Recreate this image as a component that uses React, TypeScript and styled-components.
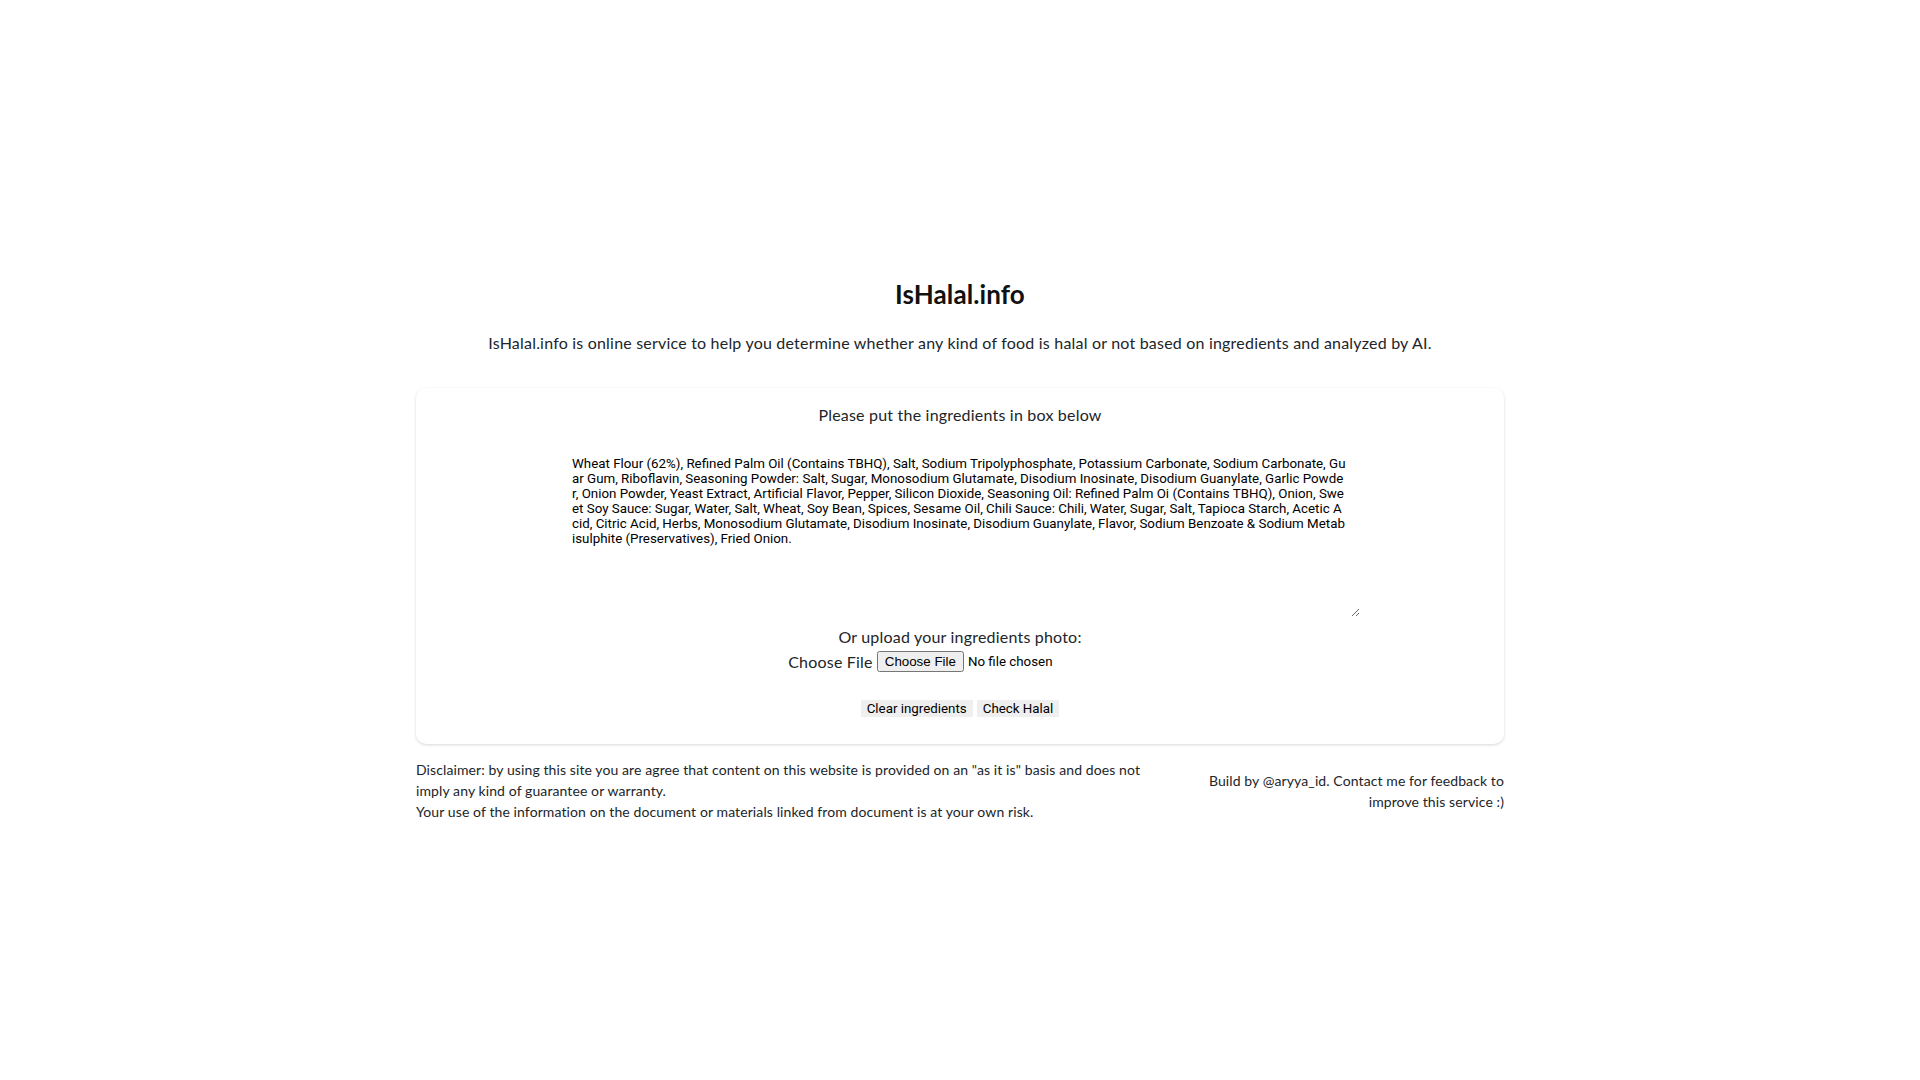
import React from "react";
import styled, { createGlobalStyle } from "styled-components";

const Global = createGlobalStyle`
  html, body { margin: 0; padding: 0; background: #ffffff; }
  body { font-family: Lato, "Noto Sans", sans-serif; color: #212529; letter-spacing: 0.2px; }
`;

const Page = styled.main`
  width: 1088px;
  margin: 0 auto;
  padding-top: 280px;
  display: flex;
  flex-direction: column;
  align-items: stretch;
`;

const Title = styled.h1`
  margin: 0;
  font-size: 26px;
  line-height: 29px;
  font-weight: 700;
  text-align: center;
  color: #111;
  letter-spacing: 0.1px;
`;

const Lead = styled.p`
  margin: 22px 0 0;
  font-size: 16px;
  line-height: 24px;
  text-align: center;
`;

const Card = styled.section`
  margin-top: 33px;
  background: #fff;
  border-radius: 10px;
  box-shadow: 0 1px 3px rgba(0, 0, 0, 0.16);
  padding: 15px 0 27px;
  display: flex;
  flex-direction: column;
  align-items: center;
`;

const Prompt = styled.p<{ $gap?: number }>`
  margin: ${(p) => p.$gap ?? 0}px 0 0;
  font-size: 16px;
  line-height: 24px;
  text-align: center;
`;

const Ingredients = styled.textarea`
  margin-top: 17px;
  width: 800px;
  height: 173px;
  box-sizing: border-box;
  padding: 12px;
  border: none;
  outline: none;
  resize: vertical;
  font-family: Roboto, "Liberation Sans", sans-serif;
  font-size: 13.33px;
  line-height: 15px;
  letter-spacing: 0;
  color: #000;
  word-break: break-all;
  background: #fff;
`;

const UploadRow = styled.div`
  display: flex;
  align-items: center;
  gap: 4px;
  height: 24px;
  font-size: 16px;
`;

const FileInput = styled.input`
  font-family: Roboto, "Liberation Sans", sans-serif;
  font-size: 13.33px;
  letter-spacing: 0;
  color: #000;
`;

const Actions = styled.div`
  margin-top: 27px;
  display: flex;
  gap: 4px;
`;

const Btn = styled.button`
  border: none;
  background: #efefef;
  padding: 1px 6px;
  font-family: Roboto, "Liberation Sans", sans-serif;
  font-size: 13.33px;
  line-height: 15px;
  letter-spacing: 0;
  color: #000;
  cursor: pointer;
`;

const Footer = styled.footer`
  margin-top: 15px;
  display: flex;
  justify-content: space-between;
  align-items: center;
  font-size: 14px;
  line-height: 21px;
  letter-spacing: 0.1px;
`;

const Disclaimer = styled.div`
  width: 750px;
`;

const Credit = styled.div`
  width: 320px;
  text-align: right;
`;

const TEXT =
  "Wheat Flour (62%), Refined Palm Oil (Contains TBHQ), Salt, Sodium Tripolyphosphate, Potassium Carbonate, Sodium Carbonate, Guar Gum, Riboflavin, Seasoning Powder: Salt, Sugar, Monosodium Glutamate, Disodium Inosinate, Disodium Guanylate, Garlic Powder, Onion Powder, Yeast Extract, Artificial Flavor, Pepper, Silicon Dioxide, Seasoning Oil: Refined Palm Oi (Contains TBHQ), Onion, Sweet Soy Sauce: Sugar, Water, Salt, Wheat, Soy Bean, Spices, Sesame Oil, Chili Sauce: Chili, Water, Sugar, Salt, Tapioca Starch, Acetic Acid, Citric Acid, Herbs, Monosodium Glutamate, Disodium Inosinate, Disodium Guanylate, Flavor, Sodium Benzoate & Sodium Metabisulphite (Preservatives), Fried Onion.";

export default function App() {
  return (
    <>
      <Global />
      <Page>
        <Title>IsHalal.info</Title>
        <Lead>
          IsHalal.info is online service to help you determine whether any kind of food is halal or
          not based on ingredients and analyzed by AI.
        </Lead>
        <Card>
          <Prompt>Please put the ingredients in box below</Prompt>
          <Ingredients defaultValue={TEXT} />
          <Prompt $gap={8}>Or upload your ingredients photo:</Prompt>
          <UploadRow>
            <span>Choose File</span>
            <FileInput type="file" accept="image/*" />
          </UploadRow>
          <Actions>
            <Btn>Clear ingredients</Btn>
            <Btn>Check Halal</Btn>
          </Actions>
        </Card>
        <Footer>
          <Disclaimer>
            Disclaimer: by using this site you are agree that content on this website is provided on
            an "as it is" basis and does not imply any kind of guarantee or warranty.
            <br />
            Your use of the information on the document or materials linked from document is at your
            own risk.
          </Disclaimer>
          <Credit>Build by @aryya_id. Contact me for feedback to improve this service :)</Credit>
        </Footer>
      </Page>
    </>
  );
}
